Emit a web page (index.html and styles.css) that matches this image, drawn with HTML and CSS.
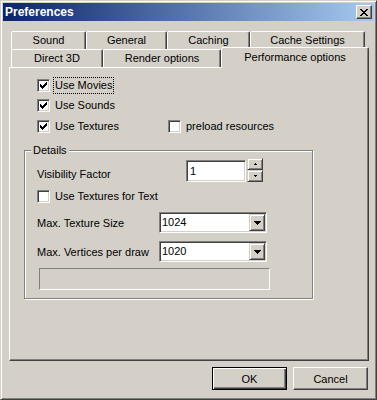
FILE: index.html
```html
<!DOCTYPE html>
<html lang="en">
<head>
    <meta charset="UTF-8">
    <title>Preferences</title>
    <link rel="stylesheet" href="styles.css">
</head>
<body>
    <div class="window">
        <div class="titlebar">
            <span class="title">Preferences</span>
            <button class="close">
                <svg width="8" height="7" viewBox="0 0 8 7"><path d="M0 0h2v1h-2z M6 0h2v1h-2z M1 1h2v1h-2z M5 1h2v1h-2z M2 2h4v1h-4z M3 3h2v1h-2z M2 4h4v1h-4z M1 5h2v1h-2z M5 5h2v1h-2z M0 6h2v1h-2z M6 6h2v1h-2z" fill="#000"/></svg>
            </button>
        </div>

        <div class="client">
            <div class="tabs">
                <div class="tab-row">
                    <div class="tab w-sound">Sound</div>
                    <div class="tab w-general">General</div>
                    <div class="tab w-caching">Caching</div>
                    <div class="tab w-cache-settings">Cache Settings</div>
                </div>
                <div class="tab-row front">
                    <div class="tab w-d3d">Direct 3D</div>
                    <div class="tab w-render">Render options</div>
                    <div class="tab selected w-perf">Performance options</div>
                </div>
            </div>

            <div class="panel">
                <div class="check-row">
                    <span class="box"><svg width="7" height="7" viewBox="0 0 7 7"><path d="M0 2v3h1v1h1v1h1v-1h1v-1h1v-1h1v-1h1v-3h-1v1h-1v1h-1v1h-1v1h-1v-1h-1v-1z" fill="#000"/></svg></span>
                    <span class="label focus">Use Movies</span>
                </div>
                <div class="check-row r2">
                    <span class="box"><svg width="7" height="7" viewBox="0 0 7 7"><path d="M0 2v3h1v1h1v1h1v-1h1v-1h1v-1h1v-1h1v-3h-1v1h-1v1h-1v1h-1v1h-1v-1h-1v-1z" fill="#000"/></svg></span>
                    <span class="label">Use Sounds</span>
                </div>
                <div class="check-row r3">
                    <div class="check-item">
                        <span class="box"><svg width="7" height="7" viewBox="0 0 7 7"><path d="M0 2v3h1v1h1v1h1v-1h1v-1h1v-1h1v-1h1v-3h-1v1h-1v1h-1v1h-1v1h-1v-1h-1v-1z" fill="#000"/></svg></span>
                        <span class="label">Use Textures</span>
                    </div>
                    <div class="check-item">
                        <span class="box"></span>
                        <span class="label">preload resources</span>
                    </div>
                </div>

                <div class="group">
                    <span class="legend">Details</span>

                    <div class="vis-row">
                        <span class="vis-label">Visibility Factor</span>
                        <div class="edit">1</div>
                        <div class="spin">
                            <div class="spin-btn"><svg width="3" height="2" viewBox="0 0 3 2"><path d="M1 0h1v1h1v1h-3v-1h1z" fill="#000"/></svg></div>
                            <div class="spin-btn"><svg width="3" height="2" viewBox="0 0 3 2"><path d="M0 0h3v1h-1v1h-1v-1h-1z" fill="#000"/></svg></div>
                        </div>
                    </div>

                    <div class="check-row tex-row">
                        <span class="box"></span>
                        <span class="label">Use Textures for Text</span>
                    </div>

                    <div class="field-row f1">
                        <span class="field-label">Max. Texture Size</span>
                        <div class="combo">
                            <span class="combo-text">1024</span>
                            <span class="combo-btn"><svg width="7" height="4" viewBox="0 0 7 4"><path d="M0 0h7v1h-1v1h-1v1h-1v1h-1v-1h-1v-1h-1v-1h-1z" fill="#000"/></svg></span>
                        </div>
                    </div>
                    <div class="field-row f2">
                        <span class="field-label">Max. Vertices per draw</span>
                        <div class="combo">
                            <span class="combo-text">1020</span>
                            <span class="combo-btn"><svg width="7" height="4" viewBox="0 0 7 4"><path d="M0 0h7v1h-1v1h-1v1h-1v1h-1v-1h-1v-1h-1v-1h-1z" fill="#000"/></svg></span>
                        </div>
                    </div>

                    <div class="status-box"></div>
                </div>
            </div>

            <div class="buttons">
                <button class="btn default">OK</button>
                <button class="btn">Cancel</button>
            </div>
        </div>
    </div>
</body>
</html>
```

FILE: styles.css
```css
:root {
    --face: #d4d0c8;
    --light: #ffffff;
    --shadow: #808080;
    --dark: #404040;
}

* {
    margin: 0;
    padding: 0;
    box-sizing: border-box;
}

body {
    background: var(--face);
    font-family: "Liberation Sans", Arial, sans-serif;
    font-size: 11px;
    color: #000;
}

.window {
    width: 377px;
    height: 400px;
    background: var(--face);
    border: 1px solid;
    border-color: var(--face) var(--dark) var(--dark) var(--face);
    box-shadow: inset 1px 1px var(--light), inset -1px -1px var(--shadow);
    padding: 2px;
}

/* title bar */
.titlebar {
    height: 18px;
    display: flex;
    align-items: center;
    justify-content: space-between;
    padding: 0 2px;
    background: linear-gradient(to right, #0a246a, #a6caf0);
}

.title {
    color: #fff;
    font-weight: bold;
    font-size: 12px;
}

.close {
    width: 16px;
    height: 14px;
    background: var(--face);
    border: 1px solid;
    border-color: var(--light) var(--dark) var(--dark) var(--light);
    box-shadow: inset -1px -1px var(--shadow);
    display: flex;
    align-items: center;
    justify-content: center;
}

.close svg,
.box svg,
.combo-btn svg,
.spin-btn svg {
    display: block;
    shape-rendering: crispEdges;
}

.client {
    padding: 10px 0 0 6px;
}

/* tabs */
.tabs {
    margin-left: 2px;
}

.tab-row {
    display: flex;
    height: 18px;
}

.tab-row.front {
    align-items: flex-end;
}

.tab {
    height: 18px;
    background: var(--face);
    border: 1px solid;
    border-bottom: none;
    border-color: var(--light) var(--dark) transparent var(--light);
    border-radius: 2px 2px 0 0;
    box-shadow: inset -1px 0 var(--shadow);
    text-align: center;
    line-height: 17px;
    white-space: nowrap;
}

.tab.selected {
    height: 21px;
    margin-bottom: -1px;
    position: relative;
    z-index: 1;
    line-height: 18px;
}

.w-sound { width: 75px; }
.w-general { width: 81px; }
.w-caching { width: 83px; }
.w-cache-settings { width: 115px; }
.w-d3d { width: 92px; }
.w-render { width: 118px; }
.w-perf { width: 148px; }

/* page panel */
.panel {
    width: 360px;
    height: 294px;
    border: 1px solid;
    border-color: var(--light) var(--dark) var(--dark) var(--light);
    box-shadow: inset -1px -1px var(--shadow);
    padding: 11px 0 0 14px;
}

.check-row {
    display: flex;
    align-items: center;
    height: 13px;
    margin-left: 13px;
}

.check-row.r2 {
    margin-top: 7px;
}

.check-row.r3 {
    margin-top: 8px;
}

.check-item {
    display: flex;
    align-items: center;
    width: 131px;
}

.box {
    flex: none;
    width: 13px;
    height: 13px;
    background: #fff;
    border: 1px solid;
    border-color: var(--shadow) var(--light) var(--light) var(--shadow);
    box-shadow: inset 1px 1px var(--dark), inset -1px -1px var(--face);
    display: flex;
    align-items: center;
    justify-content: center;
}

.label {
    margin-left: 5px;
    line-height: 13px;
    white-space: nowrap;
}

.label.focus {
    margin-left: 3px;
    padding: 1px;
    border: 1px dotted #000;
}

/* Details group */
.group {
    position: relative;
    width: 289px;
    height: 149px;
    margin-top: 17px;
    border: 1px solid var(--shadow);
    box-shadow: inset 1px 1px var(--light), 1px 1px var(--light);
    padding: 7px 0 0 12px;
}

.legend {
    position: absolute;
    top: -7px;
    left: 6px;
    padding: 0 2px;
    line-height: 13px;
    background: var(--face);
}

.vis-row {
    display: flex;
    height: 24px;
}

.vis-label {
    width: 149px;
    padding-top: 10px;
    line-height: 13px;
}

.edit {
    width: 60px;
    height: 22px;
    margin-top: 2px;
    background: #fff;
    border: 1px solid;
    border-color: var(--shadow) var(--light) var(--light) var(--shadow);
    box-shadow: inset 1px 1px var(--dark), inset -1px -1px var(--face);
    padding: 3px 0 0 3px;
    line-height: 14px;
}

.spin {
    width: 16px;
    margin-left: 1px;
    display: flex;
    flex-direction: column;
}

.spin-btn {
    height: 12px;
    background: var(--face);
    border: 1px solid;
    border-color: var(--face) var(--dark) var(--dark) var(--face);
    box-shadow: inset 1px 1px var(--light), inset -1px -1px var(--shadow);
    display: flex;
    align-items: center;
    justify-content: center;
}

.check-row.tex-row {
    margin-left: 0;
    margin-top: 8px;
}

.field-row {
    display: flex;
    align-items: center;
    height: 21px;
}

.field-row.f1 {
    margin-top: 9px;
}

.field-row.f2 {
    margin-top: 8px;
}

.field-label {
    width: 122px;
    white-space: nowrap;
}

.combo {
    width: 108px;
    height: 21px;
    display: flex;
    background: #fff;
    border: 1px solid;
    border-color: var(--shadow) var(--light) var(--light) var(--shadow);
    box-shadow: inset 1px 1px var(--dark), inset -1px -1px var(--face);
    padding: 1px;
}

.combo-text {
    flex: 1;
    padding-left: 1px;
    line-height: 17px;
}

.combo-btn {
    width: 16px;
    height: 17px;
    background: var(--face);
    border: 1px solid;
    border-color: var(--face) var(--dark) var(--dark) var(--face);
    box-shadow: inset 1px 1px var(--light), inset -1px -1px var(--shadow);
    display: flex;
    align-items: center;
    justify-content: center;
}

.status-box {
    width: 231px;
    height: 22px;
    margin: 6px 0 0 2px;
    border: 1px solid;
    border-color: var(--shadow) var(--light) var(--light) var(--shadow);
}

/* dialog buttons */
.buttons {
    width: 359px;
    display: flex;
    justify-content: flex-end;
    gap: 6px;
    margin-top: 6px;
}

.btn {
    width: 75px;
    height: 23px;
    font: inherit;
    color: #000;
    background: var(--face);
    border: 1px solid;
    border-color: var(--light) var(--dark) var(--dark) var(--light);
    box-shadow: inset -1px -1px var(--shadow);
}

.btn.default {
    border-color: #000;
    box-shadow: inset 1px 1px var(--light), inset -1px -1px var(--dark), inset -2px -2px var(--shadow);
}
```
